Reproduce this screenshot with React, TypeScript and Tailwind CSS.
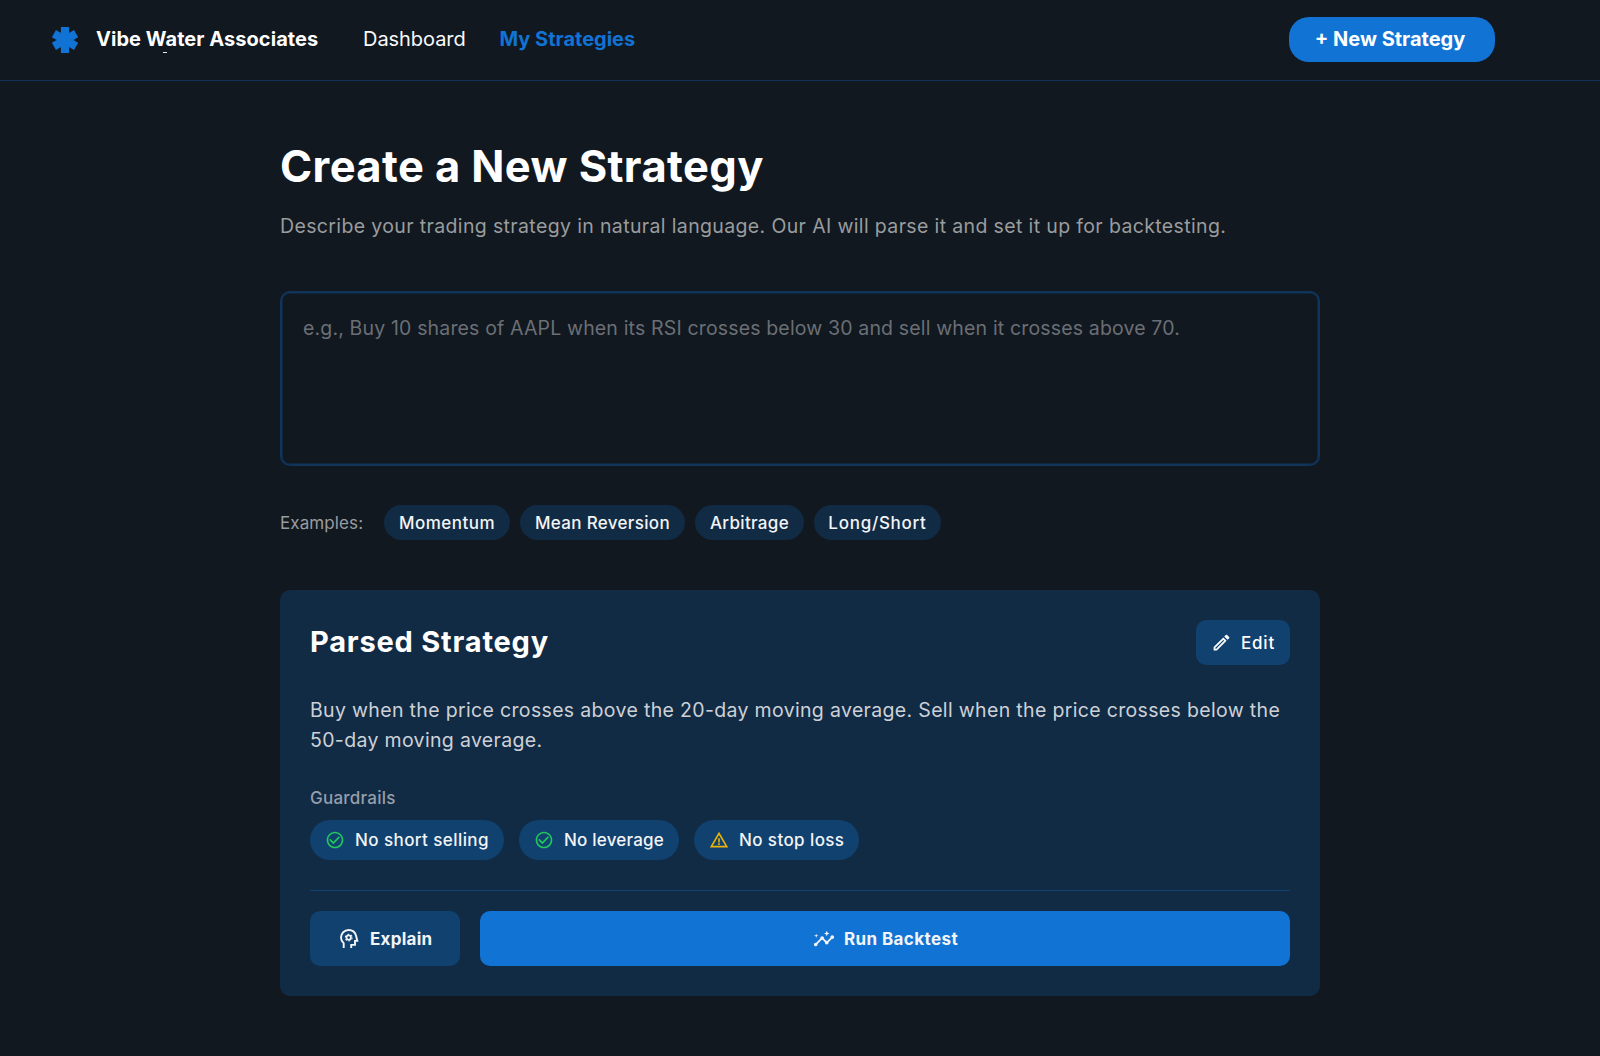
import {
  MdCheckCircleOutline,
  MdInsights,
  MdOutlineEdit,
  MdWarningAmber,
} from "react-icons/md";

const examples = [
  { label: "Momentum", className: "w-[126px] tracking-[0.47px]" },
  { label: "Mean Reversion", className: "w-[165px] tracking-[0.32px]" },
  { label: "Arbitrage", className: "w-[109px] tracking-[0.32px]" },
  { label: "Long/Short", className: "w-[127px] tracking-[0.72px]" },
];

const guardrails = [
  { label: "No short selling", ok: true, className: "w-[194px] tracking-[0.42px]" },
  { label: "No leverage", ok: true, className: "w-[160px] tracking-[0.21px]" },
  { label: "No stop loss", ok: false, className: "w-[165px] tracking-[0.4px]" },
];

function AsteriskLogo() {
  return (
    <svg viewBox="-16 -16 32 32" className="size-8 text-[#1173d4]" fill="currentColor">
      <rect x="-4.1" y="-13" width="8.2" height="26" />
      <rect x="-4.1" y="-12.8" width="8.2" height="25.6" transform="rotate(60)" />
      <rect x="-4.1" y="-12.8" width="8.2" height="25.6" transform="rotate(-60)" />
    </svg>
  );
}

function HeadGearIcon() {
  return (
    <svg viewBox="0 0 19 19" className="size-[19px]" fill="none" stroke="currentColor">
      <path
        strokeWidth="1.9"
        d="M3.7 19V14.2C2 12.8 1 10.8 1 8.6C1 4.4 4.3 1 8.6 1C12.2 1 15.1 3.3 16 6.6L17.3 11.9H15V15.9H11.2V19"
      />
      <circle cx="8.7" cy="8.6" r="2.2" strokeWidth="1.7" />
      <circle cx="8.7" cy="8.6" r="3.4" strokeWidth="1.1" strokeDasharray="1.9 1.66" />
    </svg>
  );
}

function Header() {
  return (
    <header className="flex h-[81px] items-center border-b border-[#10345a] pr-[105px] pb-0.5 pl-[49px] text-[20px] leading-[30px] whitespace-nowrap">
      <div className="pt-px">
        <AsteriskLogo />
      </div>
      <div className="relative ml-[15px] w-[267px] font-bold tracking-[0.05px]">
        Vibe Water Associates
        <span className="absolute top-[28px] left-[67px] h-px w-1 bg-white/90" />
      </div>
      <nav className="flex flex-1 items-center">
        <a className="w-[136.5px] tracking-[-0.05px] text-gray-50">Dashboard</a>
        <a className="font-bold text-[#1173d4]">My Strategies</a>
      </nav>
      <button className="h-[45px] w-[206px] rounded-[20px] bg-[#1173d4] pr-1 font-bold">
        + New Strategy
      </button>
    </header>
  );
}

function ParsedStrategy() {
  return (
    <section className="mt-[50px] h-[406px] rounded-[10px] bg-[#112b45] px-[30px] pt-[30px]">
      <div className="flex h-[45px] items-center justify-between">
        <h2 className="pb-px text-[29px] leading-[38px] font-bold tracking-[0.8px]">Parsed Strategy</h2>
        <button className="flex h-[45px] w-[94px] items-center gap-2.5 rounded-[10px] bg-[#10416f] pl-[15px] text-[17px] font-medium tracking-[0.8px]">
          <MdOutlineEdit className="-mr-px size-[21px]" />
          <span className="pt-0.5">Edit</span>
        </button>
      </div>
      <p className="mt-[30px] text-[19.5px] leading-[30px] tracking-[0.335px] whitespace-nowrap text-[#cdd1d7]">
        Buy when the price crosses above the 20-day moving average. Sell when the price crosses below the
        <br />
        50-day moving average.
      </p>
      <h3 className="mt-[31px] text-[17px] leading-[25px] font-medium tracking-[0.25px] text-[#969fab]">
        Guardrails
      </h3>
      <div className="mt-[9px] flex gap-[15px]">
        {guardrails.map((item) => (
          <div
            key={item.label}
            className={`flex h-10 items-center gap-2.5 rounded-full bg-[#10416f] pl-[15px] text-[17px] font-medium whitespace-nowrap text-gray-100 ${item.className}`}
          >
            {item.ok ? (
              <MdCheckCircleOutline className="size-5 text-[#22c55e]" />
            ) : (
              <MdWarningAmber className="size-5 text-[#eab308]" />
            )}
            <span className="pt-0.5">{item.label}</span>
          </div>
        ))}
      </div>
      <div className="mt-[30px] flex gap-5 border-t border-[#10416f] pt-5 text-[17px] font-bold">
        <button className="flex h-[55px] w-[150px] items-center gap-[11px] rounded-[10px] bg-[#10416f] pl-[30px] tracking-[0.25px] text-gray-100">
          <HeadGearIcon />
          <span className="pt-0.5">Explain</span>
        </button>
        <button className="flex h-[55px] flex-1 items-center justify-center gap-[9px] rounded-[10px] bg-[#1173d4] pl-px tracking-[0.4px] text-gray-100">
          <MdInsights className="size-[22px]" />
          <span className="pt-0.5">Run Backtest</span>
        </button>
      </div>
    </section>
  );
}

export default function App() {
  return (
    <div className="h-[1056px] overflow-hidden bg-[#111820] font-['Inter',sans-serif] text-white">
      <Header />
      <main className="mx-auto w-[1040px] pt-[58px]">
        <h1 className="text-[43.5px] leading-[54px] font-bold tracking-[0.4px]">Create a New Strategy</h1>
        <p className="mt-[18px] text-[19.5px] leading-[30px] tracking-[0.363px] whitespace-nowrap text-[#9a9c9e]">
          Describe your trading strategy in natural language. Our AI will parse it and set it up for backtesting.
        </p>
        <textarea
          className="mt-[50px] block h-[175px] w-full resize-none rounded-[10px] border-2 border-[#10345a] bg-transparent px-[21px] py-5 text-[19.5px] leading-[30px] tracking-[0.158px] shadow-[inset_0_0_0_0.5px_#10345a] placeholder:text-[#6b6f75] placeholder:opacity-100"
          placeholder="e.g., Buy 10 shares of AAPL when its RSI crosses below 30 and sell when it crosses above 70."
        />
        <div className="mt-[39px] flex h-[35px] items-center gap-2.5 text-[17px] whitespace-nowrap">
          <span className="w-[94px] pt-0.5 tracking-[0.1px] text-[#9a9c9e]">Examples:</span>
          {examples.map((item) => (
            <button
              key={item.label}
              className={`h-[35px] rounded-full bg-[#112b45] pt-0.5 font-medium text-gray-100 ${item.className}`}
            >
              {item.label}
            </button>
          ))}
        </div>
        <ParsedStrategy />
      </main>
    </div>
  );
}
